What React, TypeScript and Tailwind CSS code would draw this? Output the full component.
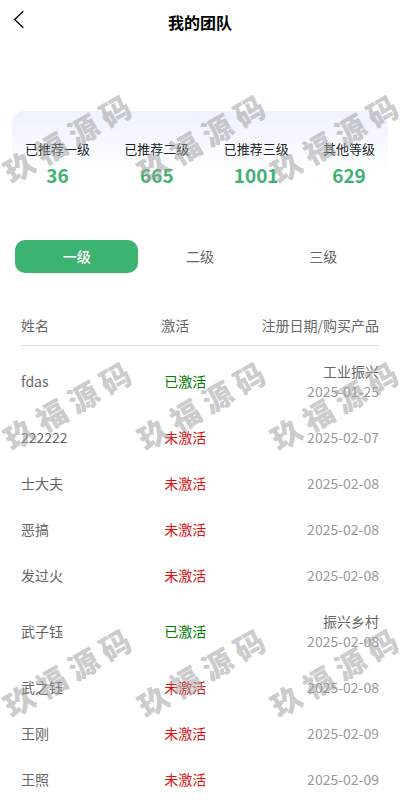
import { clsx } from "clsx";
import { useState } from "react";

type Member = {
  name: string;
  active: boolean;
  date: string;
  product?: string;
};

const STATS = [
  { label: "已推荐一级", value: 36 },
  { label: "已推荐二级", value: 665 },
  { label: "已推荐三级", value: 1001 },
  { label: "其他等级", value: 629 },
];

const TABS = ["一级", "二级", "三级"];

const MEMBERS: Member[] = [
  { name: "fdas", active: true, date: "2025-01-25", product: "工业振兴" },
  { name: "222222", active: false, date: "2025-02-07" },
  { name: "士大夫", active: false, date: "2025-02-08" },
  { name: "恶搞", active: false, date: "2025-02-08" },
  { name: "发过火", active: false, date: "2025-02-08" },
  { name: "武子钰", active: true, date: "2025-02-08", product: "振兴乡村" },
  { name: "武之钰", active: false, date: "2025-02-08" },
  { name: "王刚", active: false, date: "2025-02-09" },
  { name: "王照", active: false, date: "2025-02-09" },
];

function Header() {
  return (
    <header className="grid h-11 grid-cols-[1fr_auto_1fr] items-center px-3">
      <button aria-label="返回" className="pb-1">
        <svg width="14" height="20" viewBox="0 0 14 20" fill="none" stroke="#000" strokeWidth="1.3">
          <path d="M11.3 1.3 L2.6 9.5 L11.3 17.7" />
        </svg>
      </button>
      <h1 className="text-base font-bold text-black">我的团队</h1>
    </header>
  );
}

function StatCard() {
  return (
    <section className="mx-3 mt-[67px] flex h-[102px] justify-between rounded-xl bg-linear-to-b from-[#edf2ff] to-white to-60% px-[13px] pt-7">
      {STATS.map((s) => (
        <div key={s.label} className="text-center">
          <p className="text-[13px] leading-5 text-[#222]">{s.label}</p>
          <p className="mt-1 text-[19px] leading-6 font-bold text-[#3cb371]">{s.value}</p>
        </div>
      ))}
    </section>
  );
}

function MemberTable() {
  return (
    <div className="mx-[21px] mt-[42px]">
      <table className="w-full table-fixed text-sm leading-5 text-[#666]">
        <thead>
          <tr className="border-b border-[#d8d8d8] text-left whitespace-nowrap">
            <th className="w-1/3 pb-2.5 font-normal">姓名</th>
            <th className="w-1/3 pb-2.5 pl-[21px] font-normal">激活</th>
            <th className="w-1/3 pb-2.5 text-right font-normal">注册日期/购买产品</th>
          </tr>
        </thead>
        <tbody className="before:block before:h-0.5 before:content-['']">
          {MEMBERS.map((m) => (
            <tr key={m.name}>
              <td className="py-[13px]">{m.name}</td>
              <td className={clsx("py-[13px] pl-6", m.active ? "text-[#008000]" : "text-[#e01010]")}>
                {m.active ? "已激活" : "未激活"}
              </td>
              <td className="py-[13px] text-right">
                {m.product && <p>{m.product}</p>}
                <p className="text-[#999]">{m.date}</p>
              </td>
            </tr>
          ))}
        </tbody>
      </table>
    </div>
  );
}

/** 铺满整页的斜向水印 */
function Watermark() {
  return (
    <div
      aria-hidden="true"
      className="pointer-events-none absolute inset-0 grid auto-rows-[267px] grid-cols-3 overflow-hidden pt-1 select-none"
    >
      {Array.from({ length: 9 }, (_, i) => (
        <div key={i} className="flex items-center justify-center">
          <div className="flex -rotate-30 gap-[7px] text-3xl font-black text-[#a0a0a0]/55">
            {[..."玖福源码"].map((c) => (
              <span key={c}>{c}</span>
            ))}
          </div>
        </div>
      ))}
    </div>
  );
}

export default function App() {
  const [tab, setTab] = useState(0);

  return (
    <div className="relative min-h-screen overflow-hidden bg-white font-['Noto_Sans_CJK_SC',sans-serif]">
      <Header />
      <StatCard />
      <nav className="mx-[15px] mt-[27px] grid grid-cols-3">
        {TABS.map((t, i) => (
          <button
            key={t}
            onClick={() => setTab(i)}
            className={clsx(
              "h-[33px] rounded-[10px] pb-0.5 text-sm",
              i === tab ? "bg-[#3cb371] font-medium text-white" : "text-[#666]",
            )}
          >
            {t}
          </button>
        ))}
      </nav>
      <MemberTable />
      <Watermark />
    </div>
  );
}
